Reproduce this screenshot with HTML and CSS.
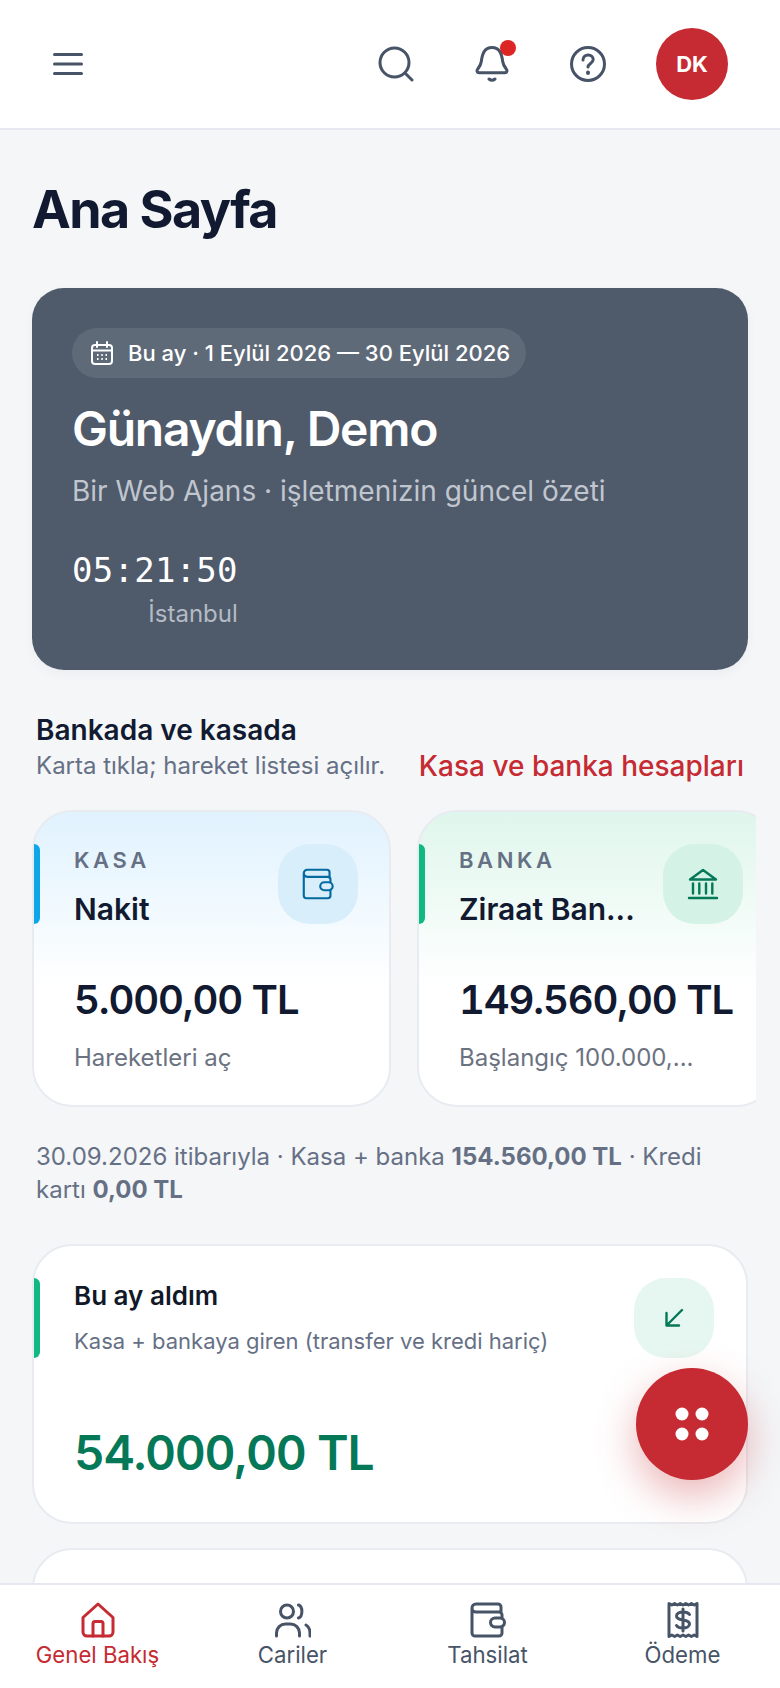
FILE: index.html
```html
<!DOCTYPE html>
<html lang="tr">
<head>
    <meta charset="UTF-8">
    <meta name="viewport" content="width=device-width, initial-scale=1.0">
    <title>Ana Sayfa</title>
    <link rel="stylesheet" href="styles.css">
</head>
<body>
    <header class="topbar">
        <svg class="menu-icon" viewBox="0 0 30 24"><path d="M1.5 2.5h27M1.5 12h27M1.5 21.5h27"/></svg>
        <div class="topbar-actions">
            <svg class="top-icon" viewBox="0 0 36 36"><circle cx="16.500" cy="16.500" r="14.500"/><path d="M27 27l7 7"/></svg>
            <span class="bell">
                <svg class="top-icon" viewBox="0 0 36 36"><path d="M3 24.500c0 1.300 1 2.200 2.200 2.200h25.600c1.200 0 2.200-.9 2.200-2.200 0-1.500-3.500-3.500-4.300-9C27.800 8.500 26 1.500 18 1.500S8.200 8.500 7.300 15.500C6.500 21 3 23 3 24.500zM15 33c2 1.600 4 1.600 6 0"/></svg>
                <i class="bell-dot"></i>
            </span>
            <svg class="top-icon" viewBox="0 0 36 36"><circle cx="18" cy="18" r="16.500"/><path d="M13 14c0-3 2.200-5 5.200-5s5 1.900 5 4.500c0 3.800-5.200 4-5.200 7.500"/><path class="dot" d="M18 26.500v.5"/></svg>
            <div class="avatar">DK</div>
        </div>
    </header>

    <main class="content">
        <h1 class="page-title">Ana Sayfa</h1>

        <section class="hero">
            <div class="hero-pill">
                <svg viewBox="0 0 24 24"><rect x="2" y="4" width="20" height="19" rx="3"/><path d="M7 1v5M17 1v5M2 9.500h20"/><path class="dots" d="M7 14h1.500M11.300 14h1.500M15.500 14h1.500M7 18h1.500M11.300 18h1.500M15.500 18h1.500"/></svg>
                <span>Bu ay · 1 Eylül 2026 — 30 Eylül 2026</span>
            </div>
            <h2 class="hero-title">Günaydın, Demo</h2>
            <p class="hero-sub">Bir Web Ajans · işletmenizin güncel özeti</p>
            <div class="clock">
                <span class="clock-time">05:21:50</span>
                <span class="clock-city">İstanbul</span>
            </div>
        </section>

        <div class="section-head">
            <div>
                <h3 class="section-title">Bankada ve kasada</h3>
                <p class="section-sub">Karta tıkla; hareket listesi açılır.</p>
            </div>
            <a class="section-link">Kasa ve banka hesapları</a>
        </div>

        <div class="account-row">
            <div class="account account-blue">
                <div class="account-top">
                    <div class="account-names">
                        <div class="account-type">KASA</div>
                        <div class="account-name">Nakit</div>
                    </div>
                    <div class="icon-box icon-blue">
                        <svg viewBox="0 0 36 36"><path d="M2 6a4 4 0 0 1 4-4h22a3 3 0 0 1 3 3v5M2 6v25a3 3 0 0 0 3 3h24a3 3 0 0 0 3-3v-6M32 16v-3a3 3 0 0 0-3-3H6a4 4 0 0 1-4-4"/><path d="M30 16h-5a4.500 4.500 0 0 0 0 9h5a4.500 4.500 0 0 0 0-9z"/></svg>
                    </div>
                </div>
                <div class="account-amount">5.000,00 TL</div>
                <div class="account-note">Hareketleri aç</div>
            </div>
            <div class="account account-green">
                <div class="account-top">
                    <div class="account-names">
                        <div class="account-type">BANKA</div>
                        <div class="account-name">Ziraat Ban...</div>
                    </div>
                    <div class="icon-box icon-green">
                        <svg viewBox="0 0 32 32"><path d="M3 11.500L16 2l13 9.500zM2 30h28M6 15.500v10M12.300 15.500v10M19 15.500v10M25.300 15.500v10"/></svg>
                    </div>
                </div>
                <div class="account-amount">149.560,00 TL</div>
                <div class="account-note">Başlangıç 100.000,...</div>
            </div>
        </div>

        <p class="summary">30.09.2026 itibarıyla · Kasa + banka <b>154.560,00 TL</b> · Kredi kartı <b>0,00 TL</b></p>

        <section class="stat-card">
            <div class="stat-top">
                <div>
                    <div class="stat-title">Bu ay aldım</div>
                    <div class="stat-sub">Kasa + bankaya giren (transfer ve kredi hariç)</div>
                </div>
                <div class="icon-box icon-mint">
                    <svg viewBox="0 0 24 24"><path d="M20 4L5 19M4.500 7v12.500H17"/></svg>
                </div>
            </div>
            <div class="stat-amount">54.000,00 TL</div>
        </section>

        <section class="stat-card"></section>
    </main>

    <button class="fab">
        <svg viewBox="0 0 34 34"><circle cx="7" cy="7" r="6.500"/><circle cx="27" cy="7" r="6.500"/><circle cx="7" cy="27" r="6.500"/><circle cx="27" cy="27" r="6.500"/></svg>
    </button>

    <nav class="bottom-nav">
        <a class="nav-item active">
            <svg viewBox="0 0 36 36"><path d="M3 15.500L18 2l15 13.500V30a4 4 0 0 1-4 4H7a4 4 0 0 1-4-4z"/><path d="M13 34V21.500a2 2 0 0 1 2-2h6a2 2 0 0 1 2 2V34"/></svg>
            <span>Genel Bakış</span>
        </a>
        <a class="nav-item">
            <svg viewBox="0 0 36 36"><circle cx="12" cy="9.500" r="6.500"/><path d="M23.500 3c4.500 1.500 4.500 11.500 0 13M1.500 34v-3a9 9 0 0 1 9-9h5a9 9 0 0 1 9 9v3M31 23c2.500 1.500 4 4.500 4 8v3"/></svg>
            <span>Cariler</span>
        </a>
        <a class="nav-item">
            <svg viewBox="0 0 36 36"><path d="M2 6a4 4 0 0 1 4-4h22a3 3 0 0 1 3 3v5M2 6v25a3 3 0 0 0 3 3h24a3 3 0 0 0 3-3v-6M32 16v-3a3 3 0 0 0-3-3H6a4 4 0 0 1-4-4"/><path d="M30 16h-5a4.500 4.500 0 0 0 0 9h5a4.500 4.500 0 0 0 0-9z"/></svg>
            <span>Tahsilat</span>
        </a>
        <a class="nav-item">
            <svg viewBox="0 0 36 36"><path d="M4 1.500l2.800 1.500 2.800-1.500 2.800 1.500 2.800-1.500 2.800 1.500 2.800-1.500 2.800 1.500 2.800-1.500 2.800 1.500 2.800-1.500v33l-2.800-1.500-2.800 1.500-2.800-1.500-2.800 1.500-2.800-1.500-2.800 1.500-2.800-1.500-2.800 1.500-2.800-1.500-2.800 1.500z"/><path d="M24.500 12.500c-1-1.500-3.500-2.500-6.500-2.500-3.500 0-6.500 1.500-6.500 4s3 3.500 6.500 4 6.500 1.500 6.500 4-3 4-6.500 4c-3 0-5.500-1-6.500-2.500M18 7v22"/></svg>
            <span>Ödeme</span>
        </a>
    </nav>
</body>
</html>
```

FILE: styles.css
```css
*{
    padding: 0;
    margin: 0;
    box-sizing: border-box;
}
html,body{
    height: 100%;
}
body{
    display: flex;
    flex-direction: column;
    overflow: hidden;
    background: #f4f6f8;
    color: #111827;
    font-family: Inter, "Liberation Sans", sans-serif;
}
svg{
    display: block;
    fill: none;
    stroke: currentColor;
    stroke-linecap: round;
    stroke-linejoin: round;
}

/* top bar */
.topbar{
    flex: none;
    height: 130px;
    display: flex;
    align-items: center;
    justify-content: space-between;
    padding: 0 52px 0 53px;
    background: #fff;
    border-bottom: 2px solid #e5e8f0;
    color: #475467;
}
.menu-icon{
    width: 30px;
    height: 24px;
    stroke-width: 3;
}
.topbar-actions{
    display: flex;
    align-items: center;
}
.top-icon{
    width: 36px;
    height: 36px;
    stroke-width: 3;
}
.top-icon .dot{
    stroke-width: 4;
}
.bell{
    position: relative;
    margin: 0 60px;
}
.bell-dot{
    position: absolute;
    top: -6px;
    right: -6px;
    width: 16px;
    height: 16px;
    border-radius: 50%;
    background: #dc2626;
}
.avatar{
    width: 72px;
    height: 72px;
    margin-left: 50px;
    border-radius: 50%;
    background: #c62a32;
    color: #fff;
    font-size: 22px;
    font-weight: 700;
    display: flex;
    align-items: center;
    justify-content: center;
}

/* main column */
.content{
    flex: 1;
    min-height: 0;
    overflow: hidden;
    padding: 48px 32px 0;
}
.page-title{
    font-size: 52px;
    line-height: 64px;
    font-weight: 700;
    letter-spacing: -1.56px;
    color: #111a30;
}

/* greeting card */
.hero{
    margin-top: 46px;
    height: 382px;
    padding: 40px;
    border-radius: 32px;
    background: #4f5a6a;
    color: #fff;
    box-shadow: 0 4px 12px rgba(17, 24, 39, 0.04);
}
.hero-pill{
    display: inline-flex;
    align-items: center;
    gap: 14px;
    height: 50px;
    padding: 0 16px 0 18px;
    border-radius: 25px;
    background: #5f6a79;
    font-size: 22px;
    font-weight: 500;
}
.hero-pill svg{
    width: 24px;
    height: 26px;
    stroke-width: 2;
}
.hero-pill .dots{
    stroke-linecap: butt;
}
.hero-title{
    margin-top: 21px;
    font-size: 48px;
    line-height: 60px;
    font-weight: 600;
    letter-spacing: -1.25px;
}
.hero-sub{
    margin-top: 12px;
    font-size: 28px;
    line-height: 40px;
    color: #c0c6cf;
}
.clock{
    display: inline-flex;
    flex-direction: column;
    align-items: flex-end;
    margin-top: 38px;
}
.clock-time{
    font-family: "DejaVu Sans Mono", monospace;
    font-size: 34px;
    line-height: 42px;
    letter-spacing: 0.25px;
}
.clock-city{
    margin-top: 7px;
    font-size: 24px;
    line-height: 32px;
    color: #b4bbc5;
}

/* accounts */
.section-head{
    display: flex;
    justify-content: space-between;
    align-items: flex-end;
    margin-top: 42px;
    padding: 0 4px;
}
.section-title{
    font-size: 28px;
    line-height: 36px;
    font-weight: 600;
    color: #111a30;
}
.section-sub{
    margin-top: 2px;
    font-size: 24px;
    line-height: 32px;
    color: #667085;
}
.section-link{
    font-size: 28px;
    line-height: 32px;
    font-weight: 500;
    color: #c62a32;
}
.account-row{
    display: flex;
    gap: 26px;
    margin: 28px -8px 0 0;
    padding-bottom: 4px;
    overflow: hidden;
}
.account{
    position: relative;
    flex: none;
    width: 359px;
    height: 297px;
    padding: 32px 31px 0 40px;
    border: 2px solid #e8ebf0;
    border-radius: 40px;
}
.account-blue{
    background: linear-gradient(180deg, #e0f2fe 0%, #fff 60%);
}
.account-green{
    background: linear-gradient(180deg, #dff6ec 0%, #fff 60%);
}
.account::before,.stat-card::before{
    content: "";
    position: absolute;
    left: 0;
    top: 32px;
    width: 6px;
    height: 80px;
    border-radius: 0 6px 6px 0;
}
.account-blue::before{
    background: #0ea5e9;
}
.account-green::before{
    background: #10b981;
}
.account-top{
    display: flex;
    justify-content: space-between;
}
.account-type{
    margin-top: 2px;
    font-size: 22px;
    line-height: 28px;
    font-weight: 600;
    letter-spacing: 3.6px;
    color: #667085;
}
.account-name{
    margin-top: 16px;
    font-size: 30px;
    line-height: 38px;
    font-weight: 600;
    color: #111a30;
}
.icon-box{
    flex: none;
    width: 80px;
    height: 80px;
    border-radius: 32px;
    display: flex;
    align-items: center;
    justify-content: center;
}
.icon-box svg{
    width: 32px;
    height: 32px;
    stroke-width: 2.4;
}
.icon-blue{
    background: #d8effb;
    color: #0369a1;
}
.icon-green{
    background: #d4f2e6;
    color: #047857;
}
.icon-mint{
    background: #e6f7f1;
    color: #047857;
}
.icon-mint svg{
    width: 24px;
    height: 24px;
}
.account-amount{
    margin-top: 46px;
    font-size: 40px;
    line-height: 52px;
    font-weight: 600;
    font-variant-numeric: tabular-nums;
    letter-spacing: -1.1px;
    white-space: nowrap;
    color: #111a30;
}
.account-note{
    margin-top: 16px;
    font-size: 24px;
    line-height: 32px;
    color: #6b7280;
}
.summary{
    margin-top: 29px;
    padding: 0 4px;
    font-size: 24px;
    line-height: 33px;
    color: #667085;
}
.summary b{
    font-weight: 700;
}

/* month cards */
.stat-card{
    position: relative;
    margin-top: 38px;
    height: 280px;
    padding: 32px 32px 0 40px;
    background: #fff;
    border: 2px solid #e8ebf0;
    border-radius: 40px;
}
.stat-card::before{
    background: #10b981;
}
.stat-card:last-child::before{
    display: none;
}
.stat-card + .stat-card{
    margin-top: 24px;
}
.stat-top{
    display: flex;
    justify-content: space-between;
}
.stat-title{
    margin-top: 1px;
    font-size: 26px;
    line-height: 34px;
    font-weight: 600;
}
.stat-sub{
    margin-top: 13px;
    font-size: 22px;
    line-height: 30px;
    color: #667085;
}
.stat-amount{
    margin-top: 63px;
    font-size: 48px;
    line-height: 64px;
    font-weight: 600;
    font-variant-numeric: tabular-nums;
    letter-spacing: -1.3px;
    color: #047857;
}

/* floating button */
.fab{
    position: fixed;
    right: 32px;
    bottom: 208px;
    width: 112px;
    height: 112px;
    border: 0;
    border-radius: 50%;
    background: #c62a32;
    color: #fff;
    display: flex;
    align-items: center;
    justify-content: center;
    box-shadow: 0 16px 40px rgba(198, 42, 50, 0.35);
}
.fab svg{
    width: 34px;
    height: 34px;
    fill: #fff;
    stroke: none;
}

/* bottom nav */
.bottom-nav{
    flex: none;
    height: 105px;
    display: grid;
    grid-template-columns: repeat(4, 1fr);
    background: #fff;
    border-top: 2px solid #e5e8f0;
}
.nav-item{
    display: flex;
    flex-direction: column;
    align-items: center;
    padding-top: 17px;
    font-size: 22.2px;
    line-height: 30px;
    color: #475467;
}
.nav-item svg{
    width: 36px;
    height: 36px;
    margin-bottom: 2px;
    stroke-width: 3;
}
.nav-item.active{
    color: #c62a32;
}
```
